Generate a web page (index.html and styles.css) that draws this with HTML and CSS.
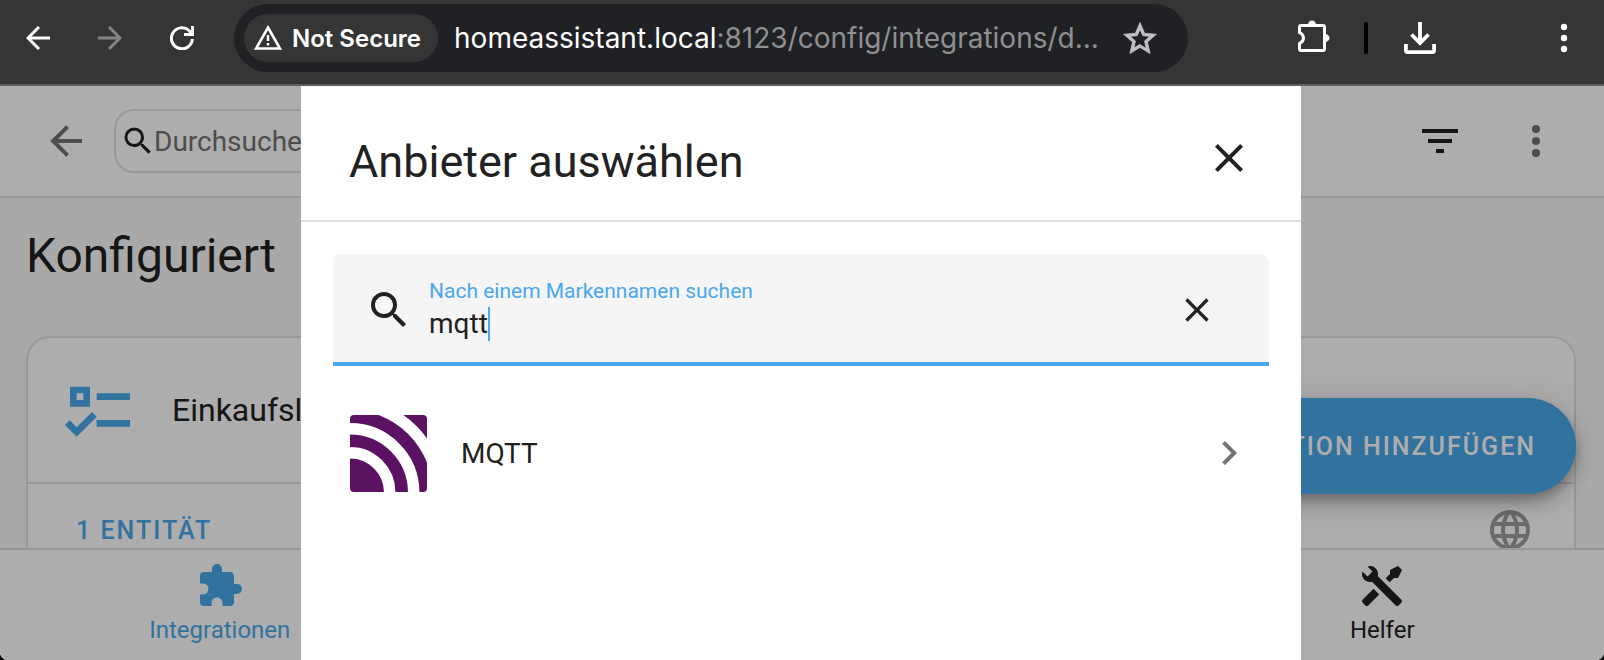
FILE: index.html
```html
<!DOCTYPE html>
<html lang="de">
<head>
<meta charset="utf-8">
<title>Einstellungen – Home Assistant</title>
<link rel="stylesheet" href="styles.css">
</head>
<body>
<div class="window">
  <header class="browser">
    <nav class="browser-nav" aria-label="Browser">
      <button class="tool" aria-label="Back"><svg class="i24" viewBox="0 0 24 24"><path d="M24 12H2M13 1L2 12l11 11" fill="none" stroke="currentColor" stroke-width="3"/></svg></button>
      <button class="tool tool-off" aria-label="Forward" disabled><svg class="i24" viewBox="0 0 24 24"><path d="M0 12h22M11 1L22 12 11 23" fill="none" stroke="currentColor" stroke-width="3"/></svg></button>
      <button class="tool" aria-label="Reload"><svg class="i24" viewBox="0 0 24 24"><path d="M22.400 13A10.500 10.500 0 1 1 19 4.500L22 8M22.500 0v8.500H14" fill="none" stroke="currentColor" stroke-width="3"/></svg></button>
    </nav>
    <div class="omnibox">
      <button class="chip"><svg class="i28" viewBox="0 0 28 28"><path d="M14 3.500L26 24.500H2z" fill="none" stroke="currentColor" stroke-width="2.600"/><path d="M14 11v6M14 19v2.500" stroke="currentColor" stroke-width="2.400"/></svg>Not Secure</button>
      <a class="url" href="#"><span class="host">homeassistant.local</span>:8123/config/integrations/d...</a>
      <button class="star" aria-label="Bookmark"><svg class="i36" viewBox="1 0.500 22 22"><path fill="currentColor" stroke="currentColor" stroke-width=".5" d="M12,15.390L8.240,17.660L9.230,13.380L5.910,10.500L10.290,10.130L12,6.090L13.710,10.130L18.090,10.500L14.770,13.380L15.760,17.660M22,9.240L14.810,8.630L12,2L9.190,8.630L2,9.240L7.450,13.970L5.820,21L12,17.270L18.180,21L16.540,13.970L22,9.240Z"/></svg></button>
    </div>
    <div class="browser-actions">
      <button class="tool" aria-label="Extensions"><svg class="i36" viewBox="0 0 36 36"><path d="M3.500 12.500V7a1.500 1.500 0 0 1 1.500-1.500h22a1.500 1.500 0 0 1 1.500 1.500v22a1.500 1.500 0 0 1-1.500 1.500H5A1.500 1.500 0 0 1 3.500 29v-5.500c5.300-2.500 5.300-8.500 0-11z" fill="none" stroke="currentColor" stroke-width="3"/><path d="M12 5a4 4.500 0 0 1 8 0zM29 14a4.500 4 0 0 1 0 8z" fill="currentColor"/></svg></button>
      <span class="separator"></span>
      <button class="tool" aria-label="Downloads"><svg class="i32" viewBox="0 0 32 32"><path d="M16 0v21M7.500 12.500L16 21l8.500-8.500M1.900 22v6.200a2 2 0 0 0 2 2h24.200a2 2 0 0 0 2-2V22" fill="none" stroke="currentColor" stroke-width="3.800"/></svg></button>
      <button class="tool tool-menu" aria-label="Menu"><svg class="i32" viewBox="0 0 32 32" fill="currentColor"><circle cx="16" cy="5" r="3.200"/><circle cx="16" cy="16" r="3.200"/><circle cx="16" cy="27" r="3.200"/></svg></button>
    </div>
  </header>

  <div class="app">
    <header class="toolbar">
      <button class="muted" aria-label="Zurück"><svg class="i48" viewBox="0 0 24 24"><path fill="currentColor" d="M20,11V13H8L13.500,18.500L12.080,19.920L4.160,12L12.080,4.080L13.500,5.500L8,11H20Z"/></svg></button>
      <label class="filter-box"><svg class="i36" viewBox="0 0 24 24"><path fill="currentColor" d="M9.500,3A6.500,6.500 0 0,1 16,9.500C16,11.110 15.410,12.590 14.440,13.730L14.710,14H15.500L20.500,19L19,20.500L14,15.500V14.710L13.730,14.440C12.590,15.410 11.110,16 9.500,16A6.500,6.500 0 0,1 3,9.500A6.500,6.500 0 0,1 9.500,3M9.500,5C7,5 5,7 5,9.500C5,12 7,14 9.500,14C12,14 14,12 14,9.500C14,7 12,5 9.500,5Z"/></svg><input type="search" placeholder="Durchsuche Integrationen" aria-label="Durchsuche Integrationen"></label>
      <button aria-label="Filter"><svg class="i48" viewBox="0 0 24 24"><path fill="currentColor" d="M6,13H18V11H6M3,6V8H21V6M10,18H14V16H10V18Z"/></svg></button>
      <button class="muted" aria-label="Mehr"><svg class="i48" viewBox="0 0 24 24"><path fill="currentColor" d="M12,16A2,2 0 0,1 14,18A2,2 0 0,1 12,20A2,2 0 0,1 10,18A2,2 0 0,1 12,16M12,10A2,2 0 0,1 14,12A2,2 0 0,1 12,14A2,2 0 0,1 10,12A2,2 0 0,1 12,10M12,4A2,2 0 0,1 14,6A2,2 0 0,1 12,8A2,2 0 0,1 10,6A2,2 0 0,1 12,4Z"/></svg></button>
    </header>

    <main class="content">
      <h1 class="heading">Konfiguriert</h1>
      <div class="cards">
        <article class="card">
          <div class="card-head"><svg class="i80 primary" viewBox="0 0 24 24"><path fill="currentColor" d="M3,5H9V11H3V5M5,7V9H7V7H5M11,7H21V9H11V7M11,15H21V17H11V15M5,20L1.500,16.500L2.910,15.090L5,17.170L9.590,12.590L11,14L5,20Z"/></svg><h2 class="card-title">Einkaufsliste</h2></div>
          <div class="card-foot"><a class="link" href="#">1 ENTITÄT</a></div>
        </article>
        <article class="card">
          <div class="card-head"><svg class="i80 primary" viewBox="0 0 24 24"><path fill="currentColor" d="M4 4h16v16H4z"/></svg><h2 class="card-title">Google Translate text-to-speech</h2></div>
          <div class="card-foot"><a class="link" href="#">1 ENTITÄT</a><svg class="i48 cloud" viewBox="0 0 24 24"><path fill="currentColor" d="M16.360,14C16.440,13.340 16.500,12.680 16.500,12C16.500,11.320 16.440,10.660 16.360,10H19.740C19.900,10.640 20,11.310 20,12C20,12.690 19.900,13.360 19.740,14M14.590,19.560C15.190,18.450 15.650,17.250 15.970,16H18.920C17.960,17.650 16.430,18.930 14.590,19.560M14.340,14H9.660C9.560,13.340 9.500,12.680 9.500,12C9.500,11.320 9.560,10.650 9.660,10H14.340C14.430,10.650 14.500,11.320 14.500,12C14.500,12.680 14.430,13.340 14.340,14M12,19.960C11.170,18.760 10.500,17.430 10.090,16H13.910C13.500,17.430 12.830,18.760 12,19.960M8,8H5.080C6.030,6.340 7.570,5.060 9.400,4.440C8.800,5.550 8.350,6.750 8,8M5.080,16H8C8.350,17.250 8.800,18.450 9.400,19.560C7.570,18.930 6.030,17.650 5.080,16M4.260,14C4.100,13.360 4,12.690 4,12C4,11.310 4.100,10.640 4.260,10H7.640C7.560,10.660 7.500,11.320 7.500,12C7.500,12.680 7.560,13.340 7.640,14M12,4.030C12.830,5.230 13.500,6.570 13.910,8H10.090C10.500,6.570 11.170,5.230 12,4.030M18.920,8H15.970C15.650,6.750 15.190,5.550 14.590,4.440C16.430,5.070 17.960,6.340 18.920,8M12,2C6.470,2 2,6.500 2,12A10,10 0 0,0 12,22A10,10 0 0,0 22,12A10,10 0 0,0 12,2Z"/></svg></div>
        </article>
      </div>
    </main>

    <button class="fab">INTEGRATION HINZUFÜGEN</button>

    <nav class="tabs">
      <a class="tab tab-active" href="#"><svg class="i48" viewBox="0 0 24 24"><path fill="currentColor" d="M20.500,11H19V7C19,5.890 18.100,5 17,5H13V3.500A2.500,2.500 0 0,0 10.500,1A2.500,2.500 0 0,0 8,3.500V5H4A2,2 0 0,0 2,7V10.800H3.500C5,10.800 6.200,12 6.200,13.500C6.200,15 5,16.200 3.500,16.200H2V20A2,2 0 0,0 4,22H7.800V20.500C7.800,19 9,17.800 10.500,17.800C12,17.800 13.200,19 13.200,20.500V22H17A2,2 0 0,0 19,20V16H20.500A2.500,2.500 0 0,0 23,13.500A2.500,2.500 0 0,0 20.500,11Z"/></svg>Integrationen</a>
      <a class="tab" href="#"><svg class="i48" viewBox="0 0 24 24"><path fill="currentColor" d="M3 6h18v2H5v9h7v3H1v-3h2zm11 4h8v10h-8z"/></svg>Geräte</a>
      <a class="tab" href="#"><svg class="i48" viewBox="0 0 24 24"><path fill="currentColor" d="M12 2l4 4-4 4-4-4zM6 8l4 4-4 4-4-4zm12 0l4 4-4 4-4-4zm-6 6l4 4-4 4-4-4z"/></svg>Entitäten</a>
      <a class="tab" href="#"><svg class="i48" viewBox="0 0 24 24"><path fill="currentColor" d="M21.710 20.290L20.290 21.710A1 1 0 0 1 18.880 21.710L7 9.850A3.810 3.810 0 0 1 6 10A4 4 0 0 1 2.220 4.700L4.760 7.240L5.290 6.710L6.710 5.290L7.240 4.760L4.700 2.220A4 4 0 0 1 10 6A3.810 3.810 0 0 1 9.850 7L21.710 18.880A1 1 0 0 1 21.710 20.290M2.290 18.880A1 1 0 0 0 2.290 20.290L3.710 21.710A1 1 0 0 0 5.120 21.710L10.590 16.250L7.760 13.420M20 2L16 4V6L13.830 8.170L15.830 10.170L18 8H20L22 4Z"/></svg>Helfer</a>
    </nav>

    <div class="scrim">
      <section class="dialog" role="dialog" aria-labelledby="dialog-title">
        <header class="dialog-head">
          <h2 class="dialog-title" id="dialog-title">Anbieter auswählen</h2>
          <button aria-label="Schließen"><svg class="i48" viewBox="0 0 24 24"><path fill="currentColor" d="M19,6.410L17.590,5L12,10.590L6.410,5L5,6.410L10.590,12L5,17.590L6.410,19L12,13.410L17.590,19L19,17.590L13.410,12L19,6.410Z"/></svg></button>
        </header>
        <div class="dialog-body">
          <div class="field">
            <svg class="i48" viewBox="0 0 24 24"><path fill="currentColor" d="M9.500,3A6.500,6.500 0 0,1 16,9.500C16,11.110 15.410,12.590 14.440,13.730L14.710,14H15.500L20.500,19L19,20.500L14,15.500V14.710L13.730,14.440C12.590,15.410 11.110,16 9.500,16A6.500,6.500 0 0,1 3,9.500A6.500,6.500 0 0,1 9.500,3M9.500,5C7,5 5,7 5,9.500C5,12 7,14 9.500,14C12,14 14,12 14,9.500C14,7 12,5 9.500,5Z"/></svg>
            <div class="field-main">
              <label class="field-label" for="brand">Nach einem Markennamen suchen</label>
              <div class="field-line"><input class="field-input" id="brand" type="text" value="mqtt"><span class="caret"></span></div>
            </div>
            <button aria-label="Löschen"><svg class="i40" viewBox="0 0 24 24"><path fill="currentColor" d="M19,6.410L17.590,5L12,10.590L6.410,5L5,6.410L10.590,12L5,17.590L6.410,19L12,13.410L17.590,19L19,17.590L13.410,12L19,6.410Z"/></svg></button>
          </div>
          <ul class="results">
            <li><a class="result" href="#">
              <svg class="logo" viewBox="0 0 77 77"><clipPath id="tile"><rect width="77" height="77" rx="4"/></clipPath><g clip-path="url(#tile)"><rect width="77" height="77" fill="#5c1262"/><g fill="none" stroke="#fff" stroke-width="11.500"><circle cx="0" cy="77.500" r="39.700"/><circle cx="0" cy="77.500" r="63.700"/><circle cx="0" cy="77.500" r="88.300"/></g></g></svg>
              <span class="result-name">MQTT</span>
              <svg class="i48 chevron" viewBox="0 0 24 24"><path fill="currentColor" d="M8.590,16.580L13.170,12L8.590,7.410L10,6L16,12L10,18L8.590,16.580Z"/></svg>
            </a></li>
          </ul>
        </div>
      </section>
    </div>
  </div>
</div>
</body>
</html>
```
FILE: styles.css
```css
* { box-sizing: border-box; }
body { margin: 0; background: #0c0c0c; font-family: Roboto, "Noto Sans", sans-serif; color: #212121; }
button { display: flex; align-items: center; justify-content: center; padding: 0; border: 0; background: none; color: inherit; font: inherit; cursor: pointer; }
input { min-width: 0; padding: 0; border: 0; outline: 0; background: none; color: inherit; font: inherit; }
a { color: inherit; text-decoration: none; }
h1, h2, ul { margin: 0; padding: 0; font-weight: 400; list-style: none; }
svg { display: block; flex: none; }

.i24 { width: 24px; height: 24px; }
.i28 { width: 28px; height: 28px; }
.i32 { width: 32px; height: 32px; }
.i36 { width: 36px; height: 36px; }
.i40 { width: 40px; height: 40px; }
.i48 { width: 48px; height: 48px; }
.i80 { width: 80px; height: 80px; }
.muted { color: #727272; }
.primary { color: #4aa8eb; }

.window { display: flex; flex-direction: column; height: 100vh; overflow: hidden; }

/* Browser chrome */
.browser { display: flex; align-items: flex-start; padding: 4px 24px 12px 26px; background: #353535; border-bottom: 2px solid #5f5e5f; color: #fff; font-family: Inter, "Noto Sans", sans-serif; }
.browser-nav { display: flex; align-items: center; gap: 48px; height: 68px; margin-right: 40px; }
.tool-off { color: #848484; }
.omnibox { display: flex; align-items: center; flex: 0 1 954px; min-width: 0; height: 68px; padding: 0 30px 0 10px; border-radius: 34px; background: #202124; }
.chip { flex: none; gap: 10px; height: 48px; padding: 0 17px 0 10px; border-radius: 24px; background: #353535; font-size: 24px; font-weight: 600; }
.url { flex: 1; min-width: 0; margin-left: 16px; overflow: hidden; white-space: nowrap; font-size: 28px; color: #8f9092; }
.host { color: #fff; }
.star { color: #c0c1c3; }
.browser-actions { display: flex; align-items: center; height: 68px; margin-left: auto; }
.separator { width: 4px; height: 32px; margin: 0 36px 0 32px; border-radius: 2px; background: #000; }
.tool-menu { margin-left: 112px; }

/* Application */
.app { position: relative; display: flex; flex-direction: column; flex: 1; min-height: 0; overflow: hidden; border-radius: 0 0 8px 8px; background: #fafafa; }
.toolbar { display: flex; align-items: center; flex: none; height: 112px; padding: 0 44px 0 42px; border-bottom: 2px solid #e0e0e0; background: #fff; }
.filter-box { display: flex; align-items: center; flex: 1; height: 64px; margin: 0 240px 0 24px; padding: 0 4px; border: 2px solid #e0e0e0; border-radius: 20px; font-size: 28px; }
.filter-box input { flex: 1; margin-left: -2px; }
.filter-box input::placeholder { color: #727272; opacity: 1; }
.toolbar .muted:last-child { margin-left: 48px; }
.content { flex: 1; min-height: 0; overflow: hidden; padding: 26px 28px 0 26px; }
.heading { margin-bottom: 48px; font-size: 48px; line-height: 64px; }
.cards { display: grid; grid-template-columns: 1fr 1fr; gap: 16px; }
.card { min-width: 0; border: 2px solid #e0e0e0; border-radius: 24px; background: #fff; }
.card-head { display: flex; align-items: center; gap: 32px; padding: 32px; }
.card-title { font-size: 32px; line-height: 48px; white-space: nowrap; }
.card-foot { display: flex; align-items: center; justify-content: space-between; height: 94px; padding: 0 40px 0 48px; border-top: 2px solid #e0e0e0; }
.link { color: #4aa8eb; font-size: 25px; font-weight: 500; letter-spacing: 2px; }
.cloud { color: #9e9e9e; }
.fab { position: absolute; right: 28px; bottom: 166px; height: 96px; padding: 0 40px 0 112px; border-radius: 48px; background: #4aa8eb; color: #fff; font-size: 25px; font-weight: 500; letter-spacing: 2px; box-shadow: 0 6px 10px rgba(0, 0, 0, .2), 0 12px 20px rgba(0, 0, 0, .14), 0 2px 36px rgba(0, 0, 0, .12); }
.tabs { position: relative; display: flex; flex: none; height: 112px; padding: 0 28px 0 26px; border-top: 2px solid #e0e0e0; background: #fff; }
.tab { display: flex; flex: 1; flex-direction: column; align-items: center; padding-top: 12px; font-size: 24px; line-height: 40px; }
.tab-active { color: #4aa8eb; }

/* Dialog */
.scrim { position: absolute; inset: 0; display: flex; justify-content: center; padding: 0 303px 0 301px; background: rgba(0, 0, 0, .32); }
.dialog { flex: 1; max-width: 1000px; background: #fff; }
.dialog-head { display: flex; align-items: center; justify-content: space-between; height: 136px; padding: 10px 48px 0; border-bottom: 2px solid #e0e0e0; }
.dialog-title { padding-top: 8px; font-size: 45px; line-height: 64px; }
.dialog-body { padding: 32px; }
.field { display: flex; align-items: center; height: 112px; padding: 4px 52px 0 32px; border-bottom: 4px solid #4aa8ee; border-radius: 8px 8px 0 0; background: #f5f5f5; }
.field-main { flex: 1; margin-left: 16px; }
.field-label { display: block; color: #4aa8ee; font-size: 21px; line-height: 28px; }
.field-line { display: flex; align-items: center; height: 38px; }
.field-input { field-sizing: content; font-size: 28px; line-height: 34px; }
.caret { width: 2px; height: 34px; background: #4aa8ee; }
.results { padding: 47px 16px 0; }
.result { display: flex; align-items: center; height: 80px; }
.logo { width: 77px; height: 77px; margin-left: 1px; }
.result-name { flex: 1; margin-left: 34px; font-size: 28px; }
.chevron { color: #727272; }
```
